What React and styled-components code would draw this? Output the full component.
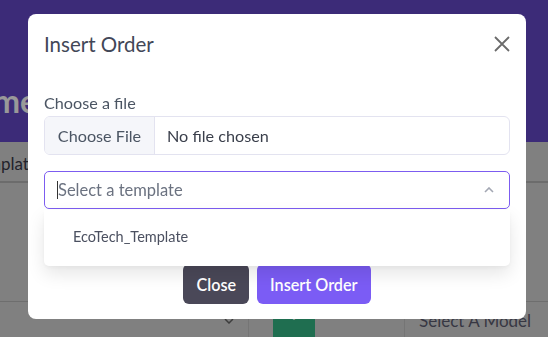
import React from 'react'
import styled, { createGlobalStyle } from 'styled-components'

const GlobalStyle = createGlobalStyle`
  html, body {
    margin: 0;
    padding: 0;
    background: #ffffff;
    font-family: "Lato", "Noto Sans", sans-serif;
    overflow: hidden;
  }
`

const App = () => {
  return (
    <>
      <GlobalStyle />
      <Page>
        <Banner>
          <BannerTitle>Welcome</BannerTitle>
        </Banner>
        <TableHead>
          <HeadCell>Template</HeadCell>
        </TableHead>
        <TableBody />
        <FormRow>
          <SelectCell>
            <Chevron width="10" height="6" viewBox="0 0 10 6">
              <path d="M1 1l4 4 4-4" fill="none" stroke="#666" strokeWidth="1.5" />
            </Chevron>
          </SelectCell>
          <AddCell>
            <AddButton>+</AddButton>
          </AddCell>
          <ModelCell>Select A Model</ModelCell>
        </FormRow>
      </Page>

      <Backdrop>
        <Modal>
          <ModalHeader>
            <ModalTitle>Insert Order</ModalTitle>
            <svg width="16" height="16" viewBox="0 0 16 16">
              <path d="M1 1l14 14M15 1L1 15" stroke="#6b6b6b" strokeWidth="1.8" />
            </svg>
          </ModalHeader>

          <ModalBody>
            <Label>Choose a file</Label>
            <FileInput>
              <FileButton>Choose File</FileButton>
              <FileName>No file chosen</FileName>
            </FileInput>

            <SelectWrap>
              <SelectBox>
                <Caret />
                <Placeholder>Select a template</Placeholder>
                <svg width="10" height="6" viewBox="0 0 10 6">
                  <path d="M1 5l4-4 4 4" fill="none" stroke="#a3a7b3" strokeWidth="1.6" />
                </svg>
              </SelectBox>
              <Menu>
                <Option>EcoTech_Template</Option>
              </Menu>
            </SelectWrap>
          </ModalBody>

          <ModalFooter>
            <Button variant="dark">Close</Button>
            <Button variant="primary">Insert Order</Button>
          </ModalFooter>
        </Modal>
      </Backdrop>
    </>
  )
}

export default App

const Page = styled.div`
  width: 100%;
  height: 337px;
  background: #d6d6d6;
`

const Banner = styled.div`
  height: 142px;
  background: #6448c8;
  display: flex;
  align-items: center;
  padding-top: 58px;
  box-sizing: border-box;
  overflow: hidden;
`

const BannerTitle = styled.h1`
  margin: 0 0 0 -97px;
  color: #ffffff;
  font-size: 32px;
  font-weight: 700;
  white-space: nowrap;
`

const TableHead = styled.div`
  height: 41px;
  display: flex;
  align-items: center;
  border-bottom: 2px solid #b4b4b4;
  box-sizing: border-box;
  overflow: hidden;
`

const HeadCell = styled.div`
  margin-left: -30px;
  margin-top: 4px;
  font-size: 17px;
  color: #3a3a48;
`

const TableBody = styled.div`
  height: 119px;
  border-bottom: 1px solid #b8b8b8;
  box-sizing: border-box;
`

const FormRow = styled.div`
  display: flex;
  height: 36px;
`

const SelectCell = styled.div`
  width: 249px;
  border-right: 1px solid #c4c4c4;
  display: flex;
  align-items: center;
  justify-content: flex-end;
  padding-right: 14px;
  box-sizing: border-box;
`

const Chevron = styled.svg`
  margin-top: 2px;
`

const AddCell = styled.div`
  width: 156px;
  border-right: 1px solid #c4c4c4;
  padding-left: 24px;
  box-sizing: border-box;
`

const AddButton = styled.div`
  width: 42px;
  height: 36px;
  background: #35b785;
  color: #e8fff4;
  font-size: 22px;
  display: flex;
  justify-content: center;
  align-items: flex-start;
  line-height: 22px;
  padding-top: 1px;
  box-sizing: border-box;
`

const ModelCell = styled.div`
  padding-left: 14px;
  padding-top: 8px;
  font-size: 17px;
  color: #5d5d70;
`

const Backdrop = styled.div`
  position: fixed;
  inset: 0;
  background: rgba(0, 0, 0, 0.4);
  display: flex;
  justify-content: center;
  align-items: flex-start;
  padding: 14px 0 0 6px;
`

const Modal = styled.div`
  width: 498px;
  height: 305px;
  background: #ffffff;
  border-radius: 8px;
  display: flex;
  flex-direction: column;
  box-sizing: border-box;
`

const ModalHeader = styled.div`
  display: flex;
  justify-content: space-between;
  align-items: center;
  padding: 16px 16px 0 16px;
  height: 28px;
`

const ModalTitle = styled.h2`
  margin: 0;
  font-size: 20.5px;
  font-weight: 400;
  color: #424757;
  line-height: 28px;
`

const ModalBody = styled.div`
  padding: 34px 16px 0 16px;
  display: flex;
  flex-direction: column;
`

const Label = styled.div`
  font-size: 16.2px;
  line-height: 22px;
  color: #4b5563;
  margin-bottom: 2px;
`

const FileInput = styled.div`
  display: flex;
  height: 39px;
  border: 1px solid #e3e3f0;
  border-radius: 6px;
  overflow: hidden;
  box-sizing: border-box;
  font-size: 16.2px;
`

const FileButton = styled.div`
  width: 109px;
  background: #f5f6fa;
  border-right: 1px solid #e3e3f0;
  color: #4b5563;
  display: flex;
  align-items: center;
  justify-content: center;
`

const FileName = styled.div`
  padding-left: 12px;
  display: flex;
  align-items: center;
  color: #3a3f4b;
`

const SelectWrap = styled.div`
  position: relative;
  margin-top: 16px;
`

const SelectBox = styled.div`
  height: 38px;
  border: 1px solid #7c5cf0;
  border-radius: 5px;
  display: flex;
  align-items: center;
  padding: 0 15px 0 12px;
  box-sizing: border-box;
`

const Caret = styled.span`
  width: 1px;
  height: 18px;
  background: #333;
`

const Placeholder = styled.span`
  flex: 1;
  font-size: 16.5px;
  color: #6b7280;
`

const Menu = styled.div`
  position: absolute;
  left: 0;
  right: 0;
  top: 39px;
  height: 56px;
  padding-bottom: 3px;
  box-sizing: border-box;
  background: #ffffff;
  border-radius: 0 0 5px 5px;
  box-shadow: 0 8px 18px rgba(0, 0, 0, 0.1), 0 2px 4px rgba(0, 0, 0, 0.04);
  display: flex;
  align-items: center;
  z-index: 2;
`

const Option = styled.div`
  padding-left: 29px;
  font-size: 14.5px;
  color: #4b5060;
`

const ModalFooter = styled.div`
  display: flex;
  justify-content: center;
  gap: 8px;
  margin-top: 55px;
`

const Button = styled.button`
  height: 40px;
  padding: 0 13px;
  border: none;
  border-radius: 6px;
  font-family: inherit;
  font-size: 16.2px;
  font-weight: 600;
  color: #ffffff;
  background: ${(p) => (p.variant === 'primary' ? '#7b5cf5' : '#4a4858')};
`
